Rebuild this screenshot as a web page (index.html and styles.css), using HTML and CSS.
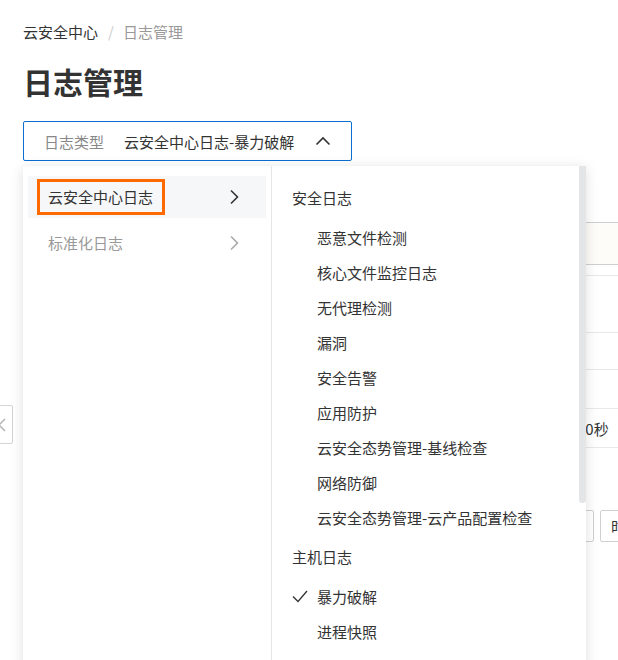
FILE: index.html
```html
<!DOCTYPE html>
<html lang="zh-CN">
<head>
<meta charset="utf-8">
<title>日志管理</title>
<link rel="stylesheet" href="styles.css">
</head>
<body>
<div class="page">
  <div class="collapse-tab">
    <svg class="collapse-icon" width="10" height="14" viewBox="0 0 10 14"><polyline points="8,1 2,7 8,13" fill="none" stroke="#b4b4b4" stroke-width="1.5"/></svg>
  </div>
  <nav class="breadcrumb">
    <span class="crumb">云安全中心</span>
    <span class="sep">/</span>
    <span class="crumb current">日志管理</span>
  </nav>
  <h1 class="title">日志管理</h1>

  <div class="select-wrap">
    <div class="select">
      <span class="select-label">日志类型</span>
      <span class="select-value">云安全中心日志-暴力破解</span>
      <svg class="select-arrow" width="16" height="10" viewBox="0 0 16 10"><polyline points="1.5,8.5 8,2 14.5,8.5" fill="none" stroke="#333" stroke-width="1.6"/></svg>
    </div>

    <div class="dropdown">
      <div class="menu-left">
        <div class="left-item active">
          <span class="left-text annotated">云安全中心日志</span>
          <svg class="chev" width="10" height="16" viewBox="0 0 10 16"><polyline points="2,1.5 8.5,8 2,14.5" fill="none" stroke="#333" stroke-width="1.6"/></svg>
        </div>
        <div class="left-item muted">
          <span class="left-text">标准化日志</span>
          <svg class="chev" width="10" height="16" viewBox="0 0 10 16"><polyline points="2,1.5 8.5,8 2,14.5" fill="none" stroke="#aaa" stroke-width="1.6"/></svg>
        </div>
      </div>
      <div class="menu-right">
        <div class="group-title">安全日志</div>
        <div class="opt">恶意文件检测</div>
        <div class="opt">核心文件监控日志</div>
        <div class="opt">无代理检测</div>
        <div class="opt">漏洞</div>
        <div class="opt">安全告警</div>
        <div class="opt">应用防护</div>
        <div class="opt">云安全态势管理-基线检查</div>
        <div class="opt">网络防御</div>
        <div class="opt">云安全态势管理-云产品配置检查</div>
        <div class="group-title">主机日志</div>
        <div class="opt selected">
          <svg class="check" width="16" height="13" viewBox="0 0 16 13"><polyline points="1,6.5 6,11.5 15,1" fill="none" stroke="#333" stroke-width="1.3"/></svg>
          暴力破解
        </div>
        <div class="opt">进程快照</div>
        <div class="scroll-thumb"></div>
      </div>
    </div>
  </div>

  <div class="bg-content">
    <div class="row r1"></div>
    <div class="row r2"></div>
    <div class="row r3"></div>
    <div class="row r4"></div>
    <div class="row r5"></div>
    <div class="row r6"></div>
    <div class="row r7"><span class="cell-text">30秒</span></div>
    <div class="row r8">
      <span class="btn btn-a">选择</span>
      <span class="btn btn-b">时间</span>
    </div>
  </div>
</div>
</body>
</html>
```

FILE: styles.css
```css
html, body {
  margin: 0;
  padding: 0;
  background: #fff;
  overflow: hidden;
}
body {
  font-family: "Noto Sans CJK SC", "Noto Sans", sans-serif;
  font-size: 15px;
  color: #333;
}
.page {
  position: relative;
  width: 618px;
  height: 660px;
  overflow: hidden;
  padding: 21px 0 0 23px;
  box-sizing: border-box;
}
.collapse-tab {
  position: absolute;
  left: -13px;
  top: 405px;
  width: 24px;
  height: 37px;
  border: 1px solid #d4d4d4;
  border-radius: 2px;
  background: #fff;
  display: flex;
  align-items: center;
  justify-content: center;
}
.collapse-icon {
  margin-left: 4px;
}
.breadcrumb {
  display: flex;
  align-items: center;
  height: 22px;
  line-height: 22px;
  font-size: 15px;
}
.crumb { color: #333; }
.crumb.current { color: #999; }
.sep {
  color: #ccc;
  margin: 0 9px 0 10px;
}
.title {
  margin: 17px 0 0 0;
  font-size: 30px;
  line-height: 42px;
  font-weight: 700;
  color: #333;
}
.select-wrap {
  position: relative;
  margin-top: 19px;
  width: 329px;
}
.select {
  box-sizing: border-box;
  height: 40px;
  border: 1px solid #0a6fd0;
  border-radius: 2px;
  display: flex;
  align-items: center;
  padding-left: 20px;
  background: #fff;
}
.select-label {
  color: #888;
  margin-right: 20px;
}
.select-value {
  color: #333;
}
.select-arrow {
  margin-left: 21px;
}
.dropdown {
  position: absolute;
  top: 45px;
  left: 0;
  width: 563px;
  height: 520px;
  background: #fff;
  box-shadow: 0 2px 12px rgba(0, 0, 0, 0.13);
  display: flex;
  z-index: 5;
}
.menu-left {
  width: 249px;
  border-right: 1px solid #e6e6e6;
  padding: 10px 5px;
  box-sizing: border-box;
  display: flex;
  flex-direction: column;
  gap: 4px;
}
.left-item {
  height: 42px;
  display: flex;
  align-items: center;
  justify-content: space-between;
  padding: 0 27px 0 9px;
}
.left-item.active {
  background: #f6f7f9;
}
.left-item.muted .left-text {
  color: #999;
}
.left-text {
  display: inline-block;
  padding: 0 9px 0 8px;
  line-height: 30px;
  border: 3px solid transparent;
}
.left-text.annotated {
  border-color: #ff6a00;
}
.menu-right {
  position: relative;
  flex: 1;
  padding: 10px 0 0 20px;
}
.group-title {
  height: 44px;
  line-height: 44px;
  color: #333;
}
.opt {
  position: relative;
  height: 35px;
  line-height: 35px;
  padding-left: 25px;
  color: #333;
}
.check {
  position: absolute;
  left: 0;
  top: 11px;
}
.scroll-thumb {
  position: absolute;
  top: 0;
  right: 0;
  width: 7px;
  height: 337px;
  background: #e4e5e7;
  border-radius: 0 0 3px 3px;
}
.bg-content {
  margin-top: 5px;
  width: 640px;
}
.row {
  box-sizing: border-box;
  border-bottom: 1px solid #e8e8e8;
}
.r1 { height: 57px; border-bottom-color: #cfcfcf; }
.r2 { height: 42px; border-bottom-color: #cfcfcf; background: #fdfcf9; }
.r3 { height: 11px; }
.r4 { height: 57px; }
.r5 { height: 37px; }
.r6 { height: 39px; }
.r7 {
  height: 39px;
  display: flex;
  align-items: center;
  padding-left: 554px;
  color: #333;
}
.r8 {
  border-bottom: none;
  padding-top: 62px;
  display: flex;
  gap: 6px;
  padding-left: 507px;
}
.btn {
  flex-shrink: 0;
  box-sizing: border-box;
  height: 32px;
  line-height: 30px;
  border: 1px solid #d0d0d0;
  border-radius: 2px;
  padding: 0 10px;
  color: #333;
  white-space: nowrap;
}
.btn-a { width: 64px; }
```
